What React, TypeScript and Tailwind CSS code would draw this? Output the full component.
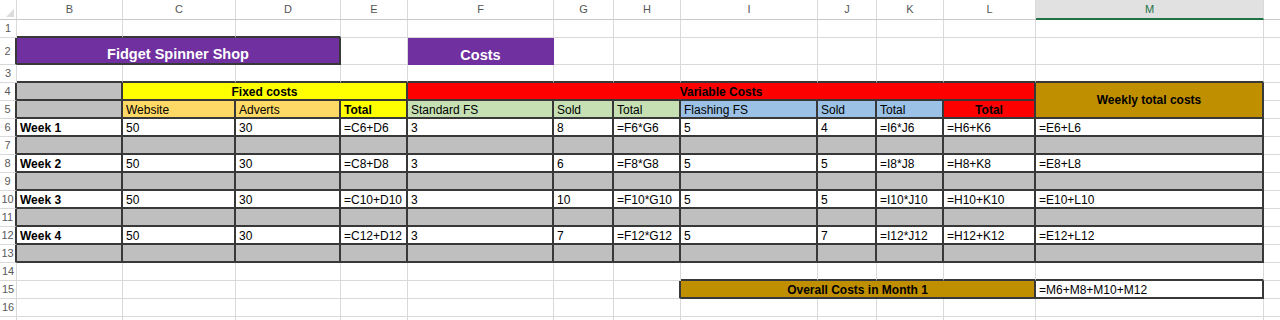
import React from "react";

const LR = "border-r border-r-[#d9d9d9]";
const LB = "border-b border-b-[#d9d9d9]";
const DR = "border-r-2 border-r-[#383838]";
const DB = "border-b-2 border-b-[#383838]";

const BASE =
  "flex overflow-hidden whitespace-nowrap text-[12px] leading-[13px] text-black";

function Cell({
  cls,
  mid,
  children,
}: {
  cls: string;
  mid?: boolean;
  children?: React.ReactNode;
}) {
  return (
    <div className={`${BASE} ${mid ? "items-center" : "items-end"} ${cls}`}>
      {children}
    </div>
  );
}

function RowHead({ n, dark }: { n?: number; dark?: boolean }) {
  return (
    <div
      className={`flex items-center justify-center bg-white text-[11px] text-[#5a5a5a] ${LB} ${
        dark ? DR : LR
      }`}
    >
      {n}
    </div>
  );
}

const COLS = ["B", "C", "D", "E", "F", "G", "H", "I", "J", "K", "L", "M", "N"];

function EmptyRow({
  n,
  darkBottom,
}: {
  n?: number;
  darkBottom: string[];
}) {
  return (
    <>
      <RowHead n={n} />
      {COLS.map((c) => (
        <Cell
          key={c}
          cls={`bg-white ${LR} ${darkBottom.includes(c) ? DB : LB}`}
        />
      ))}
    </>
  );
}

const W = `bg-white ${DR} ${DB} pl-[3px]`;
const G = `bg-[#bfbfbf] ${DR} ${DB}`;
const HB = "font-bold text-[11px]";

function WeekRow({
  r,
  week,
  g,
  j,
}: {
  r: number;
  week: number;
  g: number;
  j: number;
}) {
  return (
    <>
      <RowHead n={r} dark />
      <Cell cls={`${W} font-bold`}>Week {week}</Cell>
      <Cell cls={W}>50</Cell>
      <Cell cls={W}>30</Cell>
      <Cell cls={W}>{`=C${r}+D${r}`}</Cell>
      <Cell cls={W}>3</Cell>
      <Cell cls={W}>{g}</Cell>
      <Cell cls={W}>{`=F${r}*G${r}`}</Cell>
      <Cell cls={W}>5</Cell>
      <Cell cls={W}>{j}</Cell>
      <Cell cls={W}>{`=I${r}*J${r}`}</Cell>
      <Cell cls={W}>{`=H${r}+K${r}`}</Cell>
      <Cell cls={W}>{`=E${r}+L${r}`}</Cell>
      <Cell cls={`bg-white ${LR} ${LB}`} />
    </>
  );
}

function GrayRow({ r }: { r: number }) {
  return (
    <>
      <RowHead n={r} dark />
      {COLS.slice(0, 12).map((c) => (
        <Cell key={c} cls={G} />
      ))}
      <Cell cls={`bg-white ${LR} ${LB}`} />
    </>
  );
}

export default function App() {
  return (
    <div className="h-[320px] w-[1280px] overflow-hidden bg-white font-['Liberation_Sans',Arial,sans-serif]">
      <div className="grid w-[1364px] grid-cols-[17px_106px_113px_105px_67px_146px_60px_67px_137px_59px_67px_92px_228px_100px] grid-rows-[20px_18px_27px_18px_18px_18px_18px_18px_18px_18px_18px_18px_18px_18px_18px_18px_18px_18px]">
        {/* column headers */}
        <div
          className={`flex items-end justify-end bg-white pb-[2px] pr-[2px] ${LR} border-b border-b-[#c8c8c8]`}
        >
          <svg width="8" height="8" viewBox="0 0 8 8">
            <polygon points="8,0 8,8 0,8" fill="#dcdcdc" />
          </svg>
        </div>
        {COLS.map((c) =>
          c === "M" ? (
            <div
              key={c}
              className={`flex items-center justify-center bg-[#e1e1e1] text-[11px] text-[#217346] border-b-2 border-b-[#217346] ${LR}`}
            >
              {c}
            </div>
          ) : (
            <div
              key={c}
              className={`flex items-center justify-center bg-white text-[11px] text-[#555] ${LR} border-b border-b-[#c8c8c8]`}
            >
              {c === "N" ? "" : c}
            </div>
          )
        )}

        {/* row 1 */}
        <EmptyRow n={1} darkBottom={["B", "C", "D"]} />

        {/* row 2 */}
        <RowHead n={2} dark />
        <Cell
          cls={`col-span-3 justify-center bg-[#7030a0] ${DR} ${DB} text-[14.5px] leading-[17px] font-bold text-white`}
        >
          Fidget Spinner Shop
        </Cell>
        <Cell cls={`bg-white ${LR} ${LB}`} />
        <Cell
          cls={`justify-center bg-[#7030a0] border-r border-r-[#7030a0] border-b border-b-[#7030a0] text-[14.5px] leading-[17px] font-bold text-white`}
        >
          Costs
        </Cell>
        {COLS.slice(5).map((c) => (
          <Cell key={c} cls={`bg-white ${LR} ${LB}`} />
        ))}

        {/* row 3 */}
        <EmptyRow
          n={3}
          darkBottom={["B", "C", "D", "E", "F", "G", "H", "I", "J", "K", "L", "M"]}
        />

        {/* row 4 */}
        <RowHead n={4} dark />
        <Cell cls={G} />
        <Cell cls={`col-span-3 justify-center bg-[#ffff00] ${DR} ${DB} ${HB}`}>
          Fixed costs
        </Cell>
        <Cell cls={`col-span-7 justify-center bg-[#ff0000] ${DR} ${DB} ${HB}`}>
          Variable Costs
        </Cell>
        <Cell
          mid
          cls={`row-span-2 justify-center bg-[#bf8f00] ${DR} ${DB} ${HB}`}
        >
          Weekly total costs
        </Cell>
        <Cell cls={`bg-white ${LR} ${LB}`} />

        {/* row 5 */}
        <RowHead n={5} dark />
        <Cell cls={G} />
        <Cell cls={`bg-[#ffd966] ${DR} ${DB} pl-[3px]`}>Website</Cell>
        <Cell cls={`bg-[#ffd966] ${DR} ${DB} pl-[3px]`}>Adverts</Cell>
        <Cell cls={`bg-[#ffff00] ${DR} ${DB} pl-[3px] ${HB}`}>Total</Cell>
        <Cell cls={`bg-[#c6e0b4] ${DR} ${DB} pl-[3px]`}>Standard FS</Cell>
        <Cell cls={`bg-[#c6e0b4] ${DR} ${DB} pl-[3px]`}>Sold</Cell>
        <Cell cls={`bg-[#c6e0b4] ${DR} ${DB} pl-[3px]`}>Total</Cell>
        <Cell cls={`bg-[#9bc2e6] ${DR} ${DB} pl-[3px]`}>Flashing FS</Cell>
        <Cell cls={`bg-[#9bc2e6] ${DR} ${DB} pl-[3px]`}>Sold</Cell>
        <Cell cls={`bg-[#9bc2e6] ${DR} ${DB} pl-[3px]`}>Total</Cell>
        <Cell cls={`justify-center bg-[#ff0000] ${DR} ${DB} font-bold text-[12px]`}>
          Total
        </Cell>
        <Cell cls={`bg-white ${LR} ${LB}`} />

        <WeekRow r={6} week={1} g={8} j={4} />
        <GrayRow r={7} />
        <WeekRow r={8} week={2} g={6} j={5} />
        <GrayRow r={9} />
        <WeekRow r={10} week={3} g={10} j={5} />
        <GrayRow r={11} />
        <WeekRow r={12} week={4} g={7} j={7} />
        <GrayRow r={13} />

        {/* row 14 */}
        <EmptyRow n={14} darkBottom={["I", "J", "K", "L", "M"]} />

        {/* row 15 */}
        <RowHead n={15} />
        {COLS.slice(0, 6).map((c) => (
          <Cell key={c} cls={`bg-white ${LR} ${LB}`} />
        ))}
        <Cell cls={`bg-white ${DR} ${LB}`} />
        <Cell
          cls={`col-span-4 justify-center bg-[#bf8f00] ${DR} ${DB} ${HB}`}
        >
          Overall Costs in Month 1
        </Cell>
        <Cell cls={`bg-white ${DR} ${DB} pl-[3px]`}>=M6+M8+M10+M12</Cell>
        <Cell cls={`bg-white ${LR} ${LB}`} />

        {/* row 16, 17 */}
        <EmptyRow n={16} darkBottom={[]} />
        <EmptyRow darkBottom={[]} />
      </div>
    </div>
  );
}
